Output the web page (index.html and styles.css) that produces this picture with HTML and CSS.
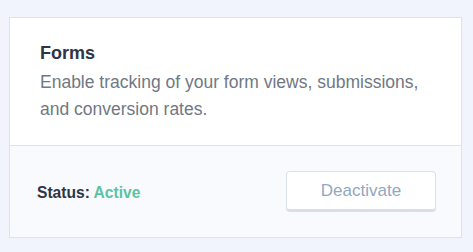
FILE: index.html
```html
<!DOCTYPE html>
<html>
<head>
<meta charset="utf-8">
<link rel="stylesheet" href="styles.css">
</head>
<body>
<div class="card">
  <div class="card-body">
    <h2 class="title">Forms</h2>
    <p class="desc">Enable tracking of your form views, submissions, and conversion rates.</p>
  </div>
  <div class="card-footer">
    <div class="status">Status: <span class="active">Active</span></div>
    <button class="btn">Deactivate</button>
  </div>
</div>
</body>
</html>
```
FILE: styles.css
```css
html, body {
  margin: 0;
  padding: 0;
}
body {
  background: #f1f4fc;
  font-family: "Liberation Sans", Arial, sans-serif;
  padding: 17px 11px 0 9px;
}
.card {
  background: #fff;
  border: 1px solid #dbe3ee;
  width: 451px;
  box-sizing: content-box;
}
.card-body {
  padding: 24px 20px 22px 30px;
  border-bottom: 1px solid #dbe3ee;
}
.title {
  margin: 0;
  font-size: 18px;
  font-weight: bold;
  color: #2d3546;
  line-height: 22px;
}
.desc {
  margin: 5px 0 0;
  font-size: 17.5px;
  line-height: 27px;
  color: #707884;
}
.card-footer {
  background: #f8fafe;
  height: 91px;
  display: flex;
  align-items: center;
  justify-content: space-between;
  padding: 0 25px 0 27px;
}
.status {
  font-size: 15.6px;
  font-weight: bold;
  color: #2d3546;
  margin-top: 3px;
}
.active {
  color: #5cc3a3;
}
.btn {
  font-family: "Liberation Sans", Arial, sans-serif;
  font-size: 17px;
  color: #93a8be;
  background: #fff;
  border: 1px solid #d8e2ec;
  border-bottom: 3px solid #d5e0ea;
  border-radius: 4px;
  width: 150px;
  height: 41px;
  padding: 0;
}
```
